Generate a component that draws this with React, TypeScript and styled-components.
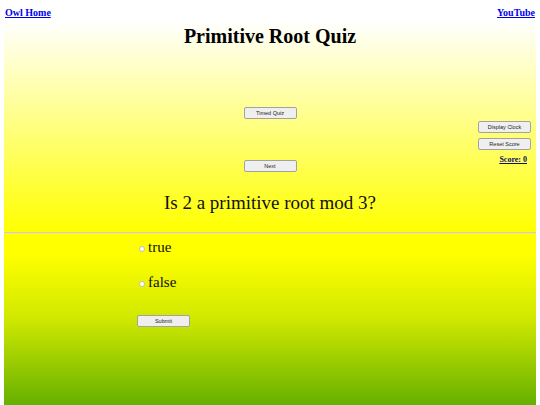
import styled, { createGlobalStyle } from "styled-components";

const GlobalStyle = createGlobalStyle`
  html, body {
    margin: 0;
    padding: 0;
    background: #ffffff;
  }
  body {
    font-family: "Liberation Serif", "Times New Roman", serif;
  }
`;

const Page = styled.div`
  margin: 0 4px;
  height: 405px;
  display: flex;
  flex-direction: column;
`;

const TopSection = styled.section`
  height: 232px;
  background: linear-gradient(to bottom, #ffffff 0%, #ffffff 9%, #ffff00 100%);
  display: flex;
  flex-direction: column;
`;

const LinkRow = styled.nav`
  display: flex;
  justify-content: space-between;
  padding: 8px 1px 0;
`;

const NavLink = styled.a`
  font-size: 10px;
  line-height: 10px;
  font-weight: bold;
  color: #0000ee;
  text-decoration: underline;
`;

const Title = styled.h1`
  margin: 8px 0 0;
  font-size: 20px;
  line-height: 20px;
  font-weight: bold;
  text-align: center;
  color: #000;
`;

const Controls = styled.div`
  margin-top: 61px;
  display: grid;
  grid-template-columns: 1fr auto 1fr;
`;

const CenterColumn = styled.div`
  grid-column: 2;
  display: flex;
  flex-direction: column;
  gap: 41px;
`;

const SideColumn = styled.div`
  grid-column: 3;
  justify-self: end;
  padding: 14px 5px 0 0;
  display: flex;
  flex-direction: column;
  align-items: flex-end;
  gap: 5px;
`;

const Button = styled.button`
  width: 53px;
  height: 12px;
  padding: 0;
  background: #efefef;
  border: 1px solid #a2a2a2;
  border-radius: 2px;
  font-family: "Liberation Sans", Arial, sans-serif;
  font-size: 5.5px;
  line-height: 10px;
  color: #222;
`;

const Score = styled.a`
  margin: 0 4px 0 0;
  font-size: 8px;
  line-height: 10px;
  font-weight: bold;
  color: #11115a;
  text-decoration: underline;
`;

const Question = styled.p`
  margin: 21px 0 0;
  font-size: 19px;
  line-height: 20px;
  text-align: center;
  color: #111;
`;

const Divider = styled.hr`
  margin: 0;
  height: 0;
  border: none;
  border-top: 1px solid #d6d29a;
  border-bottom: 1px solid #ece88c;
`;

const Answers = styled.form`
  flex: 1;
  background: linear-gradient(to bottom, #ffff00 12%, #cfe800 50%, #66b000 100%);
  padding: 6px 0 0 25%;
  display: flex;
  flex-direction: column;
  align-items: flex-start;
  gap: 20px;
`;

const Option = styled.label`
  display: flex;
  align-items: center;
  gap: 3px;
  font-size: 15px;
  line-height: 15px;
  color: #111;
`;

const Radio = styled.input`
  appearance: none;
  margin: 2px 0 0 2px;
  width: 6px;
  height: 6px;
  border-radius: 50%;
  background: #ffffff;
  border: 1px solid #bdbdbd;
`;

const SubmitButton = styled(Button)`
  margin-top: 5px;
`;

export default function App() {
  return (
    <>
      <GlobalStyle />
      <Page>
        <TopSection>
          <LinkRow>
            <NavLink href="#">Owl Home</NavLink>
            <NavLink href="#">YouTube</NavLink>
          </LinkRow>
          <Title>Primitive Root Quiz</Title>
          <Controls>
            <CenterColumn>
              <Button type="button">Timed Quiz</Button>
              <Button type="button">Next</Button>
            </CenterColumn>
            <SideColumn>
              <Button type="button">Display Clock</Button>
              <Button type="button">Reset Score</Button>
              <Score href="#">Score: 0</Score>
            </SideColumn>
          </Controls>
          <Question>Is 2 a primitive root mod 3?</Question>
        </TopSection>
        <Divider />
        <Answers onSubmit={(e) => e.preventDefault()}>
          <Option>
            <Radio type="radio" name="answer" value="true" />
            true
          </Option>
          <Option>
            <Radio type="radio" name="answer" value="false" />
            false
          </Option>
          <SubmitButton type="submit">Submit</SubmitButton>
        </Answers>
      </Page>
    </>
  );
}
